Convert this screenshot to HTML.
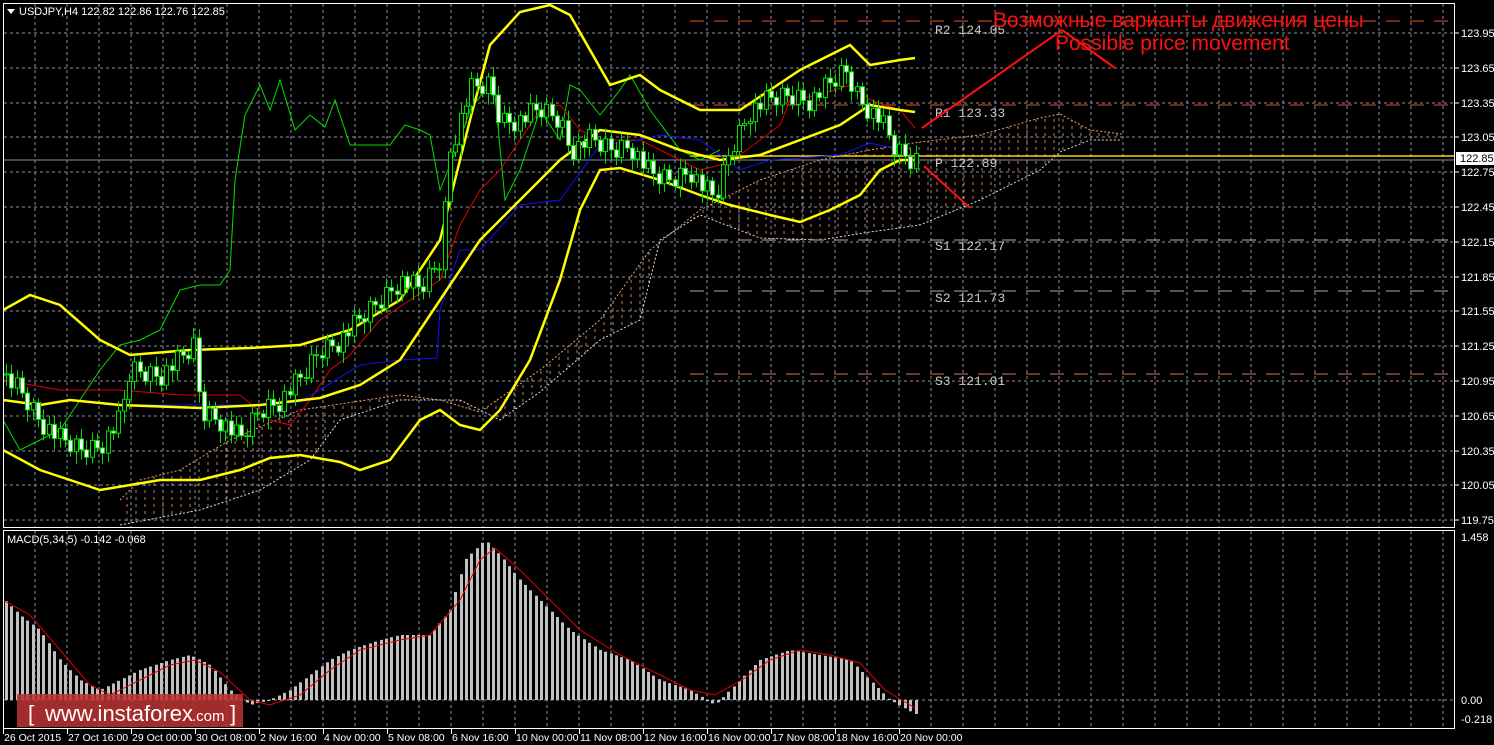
<!DOCTYPE html>
<html><head><meta charset="utf-8"><style>
html,body{margin:0;padding:0;background:#000;width:1494px;height:745px;overflow:hidden}
svg{display:block}
text{font-family:"Liberation Sans",sans-serif}
</style></head><body>
<svg id="s" width="1494" height="745" xmlns="http://www.w3.org/2000/svg">
<defs>
<pattern id="hatch" width="9" height="7" patternUnits="userSpaceOnUse">
<line x1="1" y1="0" x2="1" y2="3" stroke="#e8a070" stroke-width="1" opacity="0.8"/>
</pattern>
<clipPath id="mainclip"><rect x="3" y="3" width="1452" height="524"/></clipPath>
<clipPath id="macdclip"><rect x="3" y="531" width="1452" height="196"/></clipPath>
</defs>
<rect x="0" y="0" width="1494" height="745" fill="#000"/>
<g id="grid" stroke="#8a8f99" stroke-width="1" stroke-dasharray="3,3"></g>
<g id="cloud" clip-path="url(#mainclip)"></g>
<g id="lines" clip-path="url(#mainclip)" fill="none"></g>
<g id="candles" clip-path="url(#mainclip)"></g>
<g id="macd" clip-path="url(#macdclip)"></g>
<rect x="3.5" y="3.5" width="1451" height="524" fill="none" stroke="#fff"/>
<rect x="3.5" y="530.5" width="1451" height="198" fill="none" stroke="#fff"/>
<g id="axis" fill="#fff" font-size="11"></g>
<path d="M7 9 L15 9 L11 14 Z" fill="#fff"/>
<text x="19" y="15" fill="#fff" font-size="11">USDJPY,H4  122.82 122.86 122.76 122.85</text>
<text x="7" y="543" fill="#fff" font-size="11">MACD(5,34,5) -0.142 -0.068</text>
<g font-size="13" fill="#c8c8c8" style="font-family:'Liberation Mono',monospace">
<text x="935" y="34" style="font-family:'Liberation Mono',monospace">R2 124.05</text>
<text x="935" y="117" style="font-family:'Liberation Mono',monospace">R1 123.33</text>
<text x="935" y="167" style="font-family:'Liberation Mono',monospace">P  122.89</text>
<text x="935" y="250" style="font-family:'Liberation Mono',monospace">S1 122.17</text>
<text x="935" y="302" style="font-family:'Liberation Mono',monospace">S2 121.73</text>
<text x="935" y="385" style="font-family:'Liberation Mono',monospace">S3 121.01</text>
</g>
<text x="993" y="27" fill="#ff1010" font-size="21">Возможные варианты движения цены</text>
<text x="1055" y="50" fill="#ff1010" font-size="21">Possible price movement</text>
<g stroke="#ff1010" stroke-width="2">
<line x1="922" y1="128" x2="1062" y2="30"/>
<line x1="1062" y1="30" x2="1115" y2="68"/>
<line x1="924" y1="166" x2="970" y2="208"/>
</g>
<rect x="17" y="694" width="226" height="33" fill="#b83232" opacity="0.88"/>
<text x="28" y="721" fill="#fff" font-size="22">[</text>
<text x="45" y="721" fill="#fff" font-size="22">www.instaforex</text>
<text x="192" y="721" fill="#fff" font-size="15">.com</text>
<text x="230" y="721" fill="#fff" font-size="22">]</text>
</svg>
<script>
(function(){
var NS="http://www.w3.org/2000/svg";
function el(p,t,a){var e=document.createElementNS(NS,t);for(var k in a)e.setAttribute(k,a[k]);document.getElementById(p).appendChild(e);return e;}
function interp(pts,x){if(x<=pts[0][0])return pts[0][1];for(var i=1;i<pts.length;i++){if(x<=pts[i][0]){var a=pts[i-1],b=pts[i];return a[1]+(b[1]-a[1])*(x-a[0])/(b[0]-a[0]);}}return pts[pts.length-1][1];}
function pl(pts){return pts.map(function(p){return p.join(",")}).join(" ");}
var x,y,i,t;
for(x=35;x<1455;x+=32){el("grid","line",{x1:x,y1:4,x2:x,y2:527});el("grid","line",{x1:x,y1:531,x2:x,y2:728});}
var prices=["123.95","123.65","123.35","123.05","122.75","122.45","122.15","121.85","121.55","121.25","120.95","120.65","120.35","120.05","119.75"];
for(i=0;i<prices.length;i++){y=Math.round(33+i*34.8);el("grid","line",{x1:4,y1:y,x2:1454,y2:y});
 el("axis","line",{x1:1455,y1:y,x2:1459,y2:y,stroke:"#fff"});
 t=el("axis","text",{x:1461,y:y+4});t.textContent=prices[i];}
el("grid","line",{x1:4,y1:700,x2:1454,y2:700});
[["1.458",541],["0.00",704],["-0.218",723]].forEach(function(a){var tt=el("axis","text",{x:1461,y:a[1]});tt.textContent=a[0];});
var dates=["26 Oct 2015","27 Oct 16:00","29 Oct 00:00","30 Oct 08:00","2 Nov 16:00","4 Nov 00:00","5 Nov 08:00","6 Nov 16:00","10 Nov 00:00","11 Nov 08:00","12 Nov 16:00","16 Nov 00:00","17 Nov 08:00","18 Nov 16:00","20 Nov 00:00"];
for(i=0;i<dates.length;i++){x=3+i*64;el("axis","line",{x1:x+0.5,y1:729,x2:x+0.5,y2:734,stroke:"#fff"});t=el("axis","text",{x:x+1,y:741,"font-size":"10.5"});t.textContent=dates[i];}
el("axis","rect",{x:1456,y:152,width:38,height:13,fill:"#fff"});
t=el("axis","text",{x:1460,y:162,fill:"#000"});t.textContent="122.85";
var A=[[120,500],[140,480],[180,470],[230,440],[300,410],[400,395],[440,400],[480,412],[540,370],[600,320],[650,250],[700,210],[760,180],[820,160],[870,150],[920,142],[980,135],[1040,118],[1060,114],[1090,130],[1122,134]];
var B=[[120,525],[200,510],[260,490],[310,460],[340,420],[400,400],[460,400],[500,420],[540,392],[600,340],[640,320],[660,240],[700,215],[760,238],[820,240],[870,232],[920,225],[980,200],[1040,170],[1060,152],[1090,140],[1122,140]];
el("cloud","polygon",{points:pl(A.concat(B.slice().reverse())),fill:"url(#hatch)"});
el("cloud","polyline",{points:pl(A),fill:"none",stroke:"#e8a070","stroke-dasharray":"2,2"});
el("cloud","polyline",{points:pl(B),fill:"none",stroke:"#ddd","stroke-dasharray":"2,2"});
function hl(yy,c,x1,dash,w){el("lines","line",{x1:x1,y1:yy,x2:1454,y2:yy,stroke:c,"stroke-dasharray":dash,"stroke-width":w||1});}
hl(21,"#e05020",690,"14,10");hl(105,"#e05020",690,"14,10");
hl(240,"#c8a0a0",690,"14,10");hl(291,"#c8a0a0",690,"14,10");hl(374,"#e07050",690,"14,10");
el("lines","line",{x1:4,y1:160,x2:1454,y2:160,stroke:"#8090a0"});
el("lines","line",{x1:690,y1:156,x2:1454,y2:156,stroke:"#ffd000","stroke-width":1.5});
var green=[[3,420],[20,450],[40,440],[60,430],[80,400],[100,370],[120,345],[140,340],[160,330],[180,290],[200,285],[220,285],[230,270],[235,180],[245,115],[260,85],[270,110],[280,80],[295,130],[310,115],[325,127],[335,100],[350,145],[370,145],[390,145],[405,125],[420,130],[430,135],[440,190],[450,165],[460,140],[470,110],[485,90],[495,95],[505,200],[520,170],[540,110],[560,140],[570,85],[580,90],[600,115],[620,90],[630,75],[650,110],[680,150],[700,160],[720,150]];
var red=[[3,380],[60,390],[120,390],[180,395],[240,395],[270,420],[290,425],[310,400],[330,370],[350,355],[380,320],[410,300],[440,280],[460,225],[480,190],[500,170],[520,140],[540,110],[560,105],[580,130],[600,140],[640,140],[660,150],[700,170],[720,165],[740,155],[760,140],[780,125],[790,100],[820,95],[850,85],[870,100],[900,110],[915,128]];
var blue=[[120,405],[200,405],[260,405],[300,402],[360,365],[400,360],[437,358],[440,310],[460,250],[480,250],[520,205],[560,200],[600,145],[640,140],[660,135],[700,140],[740,170],[770,160],[800,158],[840,155],[870,143],[900,150]];
var bbU=[[3,310],[30,295],[60,305],[100,340],[130,355],[190,350],[250,348],[300,345],[350,330],[400,300],[440,240],[470,120],[490,45],[520,12],[550,5],[570,15],[590,50],[610,85],[640,75],[660,90],[700,110],[740,110],[770,90],[800,70],[830,55],[850,45],[870,65],[900,60],[915,58]];
var bbM=[[3,400],[40,405],[70,400],[120,405],[200,408],[260,405],[320,398],[360,385],[400,360],[440,300],[480,240],[520,200],[560,160],[600,130],[640,135],[680,150],[720,160],[760,155],[800,140],[840,125],[870,105],[900,110],[915,112]];
var bbL=[[3,450],[40,470],[70,480],[100,490],[130,485],[160,480],[200,480],[240,470],[270,458],[300,455],[340,462],[360,470],[390,460],[420,420],[440,410],[460,425],[480,430],[500,410],[530,360],[560,280],[580,210],[600,170],[620,168],[660,180],[700,195],[730,205],[770,215],[800,222],[830,210],[860,195],[880,170],[900,160],[915,160]];
el("lines","polyline",{points:pl(green),stroke:"#00e000"});
el("lines","polyline",{points:pl(red),stroke:"#e00000"});
el("lines","polyline",{points:pl(blue),stroke:"#1010ff"});
[bbU,bbM,bbL].forEach(function(p){el("lines","polyline",{points:pl(p),stroke:"#ffff00","stroke-width":2.5});});
var cl=[[5,375],[20,390],[40,420],[60,440],[80,450],[100,445],[120,420],[130,370],[160,375],[180,360],[195,345],[200,410],[220,420],[240,440],[260,410],[280,400],[300,380],[320,350],[340,340],[360,320],[380,300],[400,280],[420,290],[440,260],[450,150],[470,90],[490,85],[500,120],[520,120],[540,110],[560,120],[570,150],[590,140],[610,150],[630,145],[650,175],[670,180],[690,170],[700,185],[715,200],[730,150],[750,110],[770,100],[790,95],[810,100],[830,85],[845,70],[860,100],[880,120],[895,150],[910,160]];
var prev=interp(cl,0),k=0;
for(x=6;x<=916;x+=5.35){k++;var c=interp(cl,x)+((k*37)%11-5)*2.2;var o=prev;prev=c;
 var hi=Math.min(o,c)-4-(k*13%7),lo=Math.max(o,c)+4+(k*7%9);
 var xx=Math.round(x);
 el("candles","line",{x1:xx+0.5,y1:hi,x2:xx+0.5,y2:lo,stroke:"#00e000"});
 var h=Math.max(Math.abs(c-o),1);
 el("candles","rect",{x:xx-1.5,y:Math.min(o,c),width:4,height:h,fill:(c>o?"#fff":"#000"),stroke:"#00e000","stroke-width":1});}
var mh=[[5,600],[20,615],[40,630],[60,660],[80,680],[100,690],[120,680],[140,670],[170,660],[190,655],[210,665],[230,690],[250,705],[270,700],[290,690],[310,675],[330,660],[350,650],[380,640],[400,635],[430,635],[450,610],[465,560],[485,540],[500,555],[520,580],[540,600],[570,630],[600,650],[630,660],[660,680],[690,690],[715,705],[740,680],[760,660],[790,650],[820,655],[850,660],[870,680],[890,700],[915,714]];
for(x=6;x<=916;x+=5.35){y=interp(mh,x);var x2=Math.round(x);
 el("macd","rect",{x:x2-1,y:Math.min(y,700),width:3,height:Math.max(Math.abs(700-y),1),fill:"#c0c0c0"});}
var sp=[[3,600],[30,615],[60,650],[90,685],[110,695],[140,680],[170,665],[195,660],[220,672],[250,700],[270,705],[300,695],[330,670],[360,650],[400,640],[430,635],[460,600],[480,560],[495,548],[520,570],[550,600],[580,630],[620,655],[660,675],[690,690],[715,695],[745,678],[770,660],[800,650],[830,655],[860,663],[885,690],[915,708]];
el("macd","polyline",{points:pl(sp),fill:"none",stroke:"#e00000"});
})();
</script>
</body></html>
